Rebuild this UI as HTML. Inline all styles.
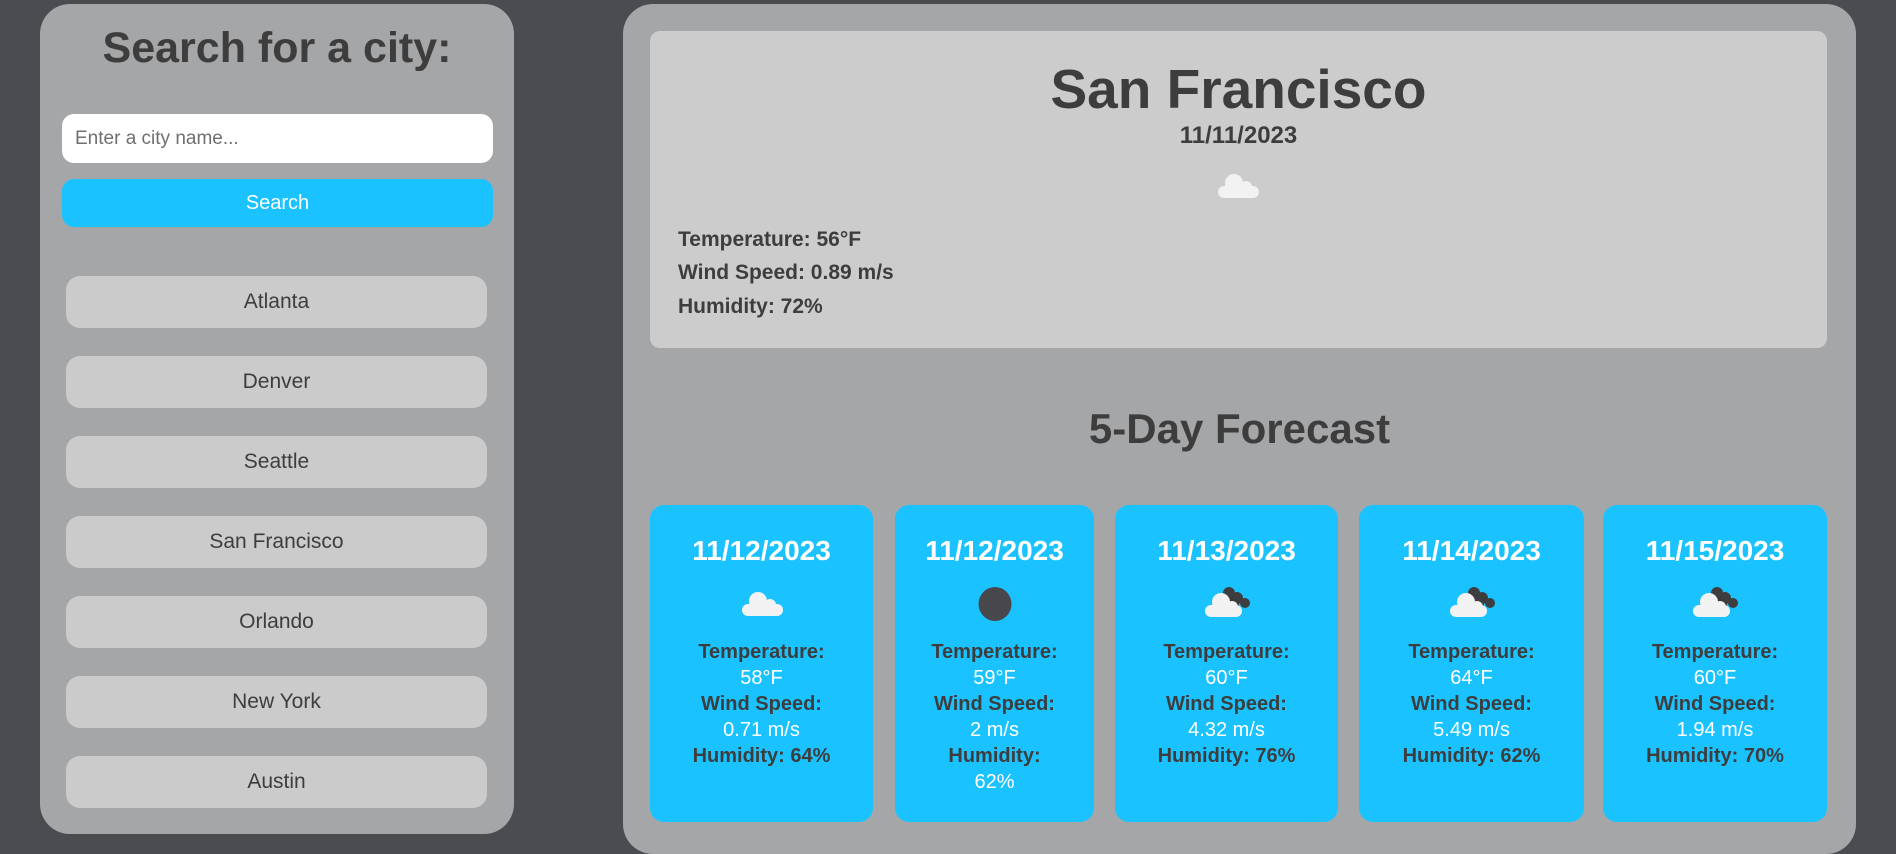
<!DOCTYPE html>
<html><head><meta charset="utf-8"><style>
*{box-sizing:border-box;margin:0;padding:0}
body{width:1896px;height:844px;background:#4b4c50;font-family:"Liberation Sans",Arial,sans-serif;position:relative;overflow:hidden;color:#3d3d3d}
.a{position:absolute}
.left{left:40px;top:4px;width:474px;height:830px;background:#a5a6a8;border-radius:30px}
.h1{left:40px;width:474px;top:24px;text-align:center;font-weight:bold;font-size:43px}
.inp{left:62px;top:114px;width:431px;height:49px;background:#fff;border-radius:12px;font-size:19px;color:#6f6f6f;padding:14px 13px}
.btn{left:62px;top:179px;width:431px;height:48px;background:#1ac3ff;border-radius:12px;color:#fff;font-size:20px;text-align:center;line-height:48px}
.city{left:66px;width:421px;height:52px;background:#cbcbcb;border-radius:14px;font-size:21px;text-align:center;line-height:52px}
.right{left:623px;top:4px;width:1233px;height:850px;background:#a5a6a8;border-radius:30px}
.cur{left:650px;top:31px;width:1177px;height:317px;background:#cccccc;border-radius:10px}
.c{text-align:center}
.info{left:678px;font-weight:bold;font-size:21px}
.card{top:505px;height:317px;background:#1ac3ff;border-radius:14px;text-align:center;font-size:20px;line-height:26px;color:#fff}
.card .d{font-weight:bold;font-size:28px;margin-top:29px;height:34px;line-height:34px}
.card .ic{height:52px;position:relative;margin-top:14px}
.card b{color:#3d3d3d}
.card .t{margin-top:5px}
</style></head><body>
<div class="a left"></div>
<div class="a h1">Search for a city:</div>
<div class="a inp">Enter a city name...</div>
<div class="a btn">Search</div>
<div class="a city" style="top:276px">Atlanta</div>
<div class="a city" style="top:356px">Denver</div>
<div class="a city" style="top:436px">Seattle</div>
<div class="a city" style="top:516px">San Francisco</div>
<div class="a city" style="top:596px">Orlando</div>
<div class="a city" style="top:676px">New York</div>
<div class="a city" style="top:756px">Austin</div>

<div class="a right"></div>
<div class="a cur"></div>
<div class="a c" style="left:650px;width:1177px;top:58px;font-size:55px;font-weight:bold;line-height:62px">San Francisco</div>
<div class="a c" style="left:650px;width:1177px;top:122px;font-size:24px;font-weight:bold">11/11/2023</div>
<svg class="a" style="left:1216px;top:170px" width="44" height="30" viewBox="0 0 44 30"><g fill="#f2f2f2"><circle cx="18" cy="13" r="9"/><circle cx="30" cy="17" r="6"/><rect x="2" y="16" width="41" height="12" rx="6"/></g></svg>
<div class="a info" style="top:228px">Temperature: 56°F</div>
<div class="a info" style="top:261px">Wind Speed: 0.89 m/s</div>
<div class="a info" style="top:295px">Humidity: 72%</div>

<div class="a c" style="left:623px;width:1233px;top:405px;font-size:42px;font-weight:bold">5-Day Forecast</div>

<div class="a card" style="left:650px;width:223px"><div class="d">11/12/2023</div><div class="ic"><svg width="44" height="30" viewBox="0 0 44 30" style="margin-top:6px"><g fill="#f2f2f2"><circle cx="18" cy="13" r="9"/><circle cx="30" cy="17" r="6"/><rect x="2" y="16" width="41" height="12" rx="6"/></g></svg></div><div class="t"><b>Temperature:</b><br>58°F<br><b>Wind Speed:</b><br>0.71 m/s<br><b>Humidity: 64%</b></div></div>

<div class="a card" style="left:895px;width:199px"><div class="d">11/12/2023</div><div class="ic"><svg width="40" height="40" viewBox="0 0 40 40" style="margin-top:2px"><ellipse cx="20" cy="20" rx="16.5" ry="17" fill="#48484c"/></svg></div><div class="t"><b>Temperature:</b><br>59°F<br><b>Wind Speed:</b><br>2 m/s<br><b>Humidity:</b><br>62%</div></div>

<div class="a card" style="left:1115px;width:223px"><div class="d">11/13/2023</div><div class="ic"><svg width="52" height="36" viewBox="0 0 52 36" style="margin-top:2px"><g fill="#3d3d40"><circle cx="28" cy="9" r="6"/><circle cx="36" cy="14" r="6"/><circle cx="44" cy="19" r="5"/><circle cx="32" cy="20" r="6"/></g><g fill="#f2f2f2"><circle cx="20" cy="18" r="9"/><circle cx="31" cy="23" r="6"/><rect x="4" y="21" width="37" height="12" rx="6"/></g></svg></div><div class="t"><b>Temperature:</b><br>60°F<br><b>Wind Speed:</b><br>4.32 m/s<br><b>Humidity: 76%</b></div></div>

<div class="a card" style="left:1359px;width:225px"><div class="d">11/14/2023</div><div class="ic"><svg width="52" height="36" viewBox="0 0 52 36" style="margin-top:2px"><g fill="#3d3d40"><circle cx="28" cy="9" r="6"/><circle cx="36" cy="14" r="6"/><circle cx="44" cy="19" r="5"/><circle cx="32" cy="20" r="6"/></g><g fill="#f2f2f2"><circle cx="20" cy="18" r="9"/><circle cx="31" cy="23" r="6"/><rect x="4" y="21" width="37" height="12" rx="6"/></g></svg></div><div class="t"><b>Temperature:</b><br>64°F<br><b>Wind Speed:</b><br>5.49 m/s<br><b>Humidity: 62%</b></div></div>

<div class="a card" style="left:1603px;width:224px"><div class="d">11/15/2023</div><div class="ic"><svg width="52" height="36" viewBox="0 0 52 36" style="margin-top:2px"><g fill="#3d3d40"><circle cx="28" cy="9" r="6"/><circle cx="36" cy="14" r="6"/><circle cx="44" cy="19" r="5"/><circle cx="32" cy="20" r="6"/></g><g fill="#f2f2f2"><circle cx="20" cy="18" r="9"/><circle cx="31" cy="23" r="6"/><rect x="4" y="21" width="37" height="12" rx="6"/></g></svg></div><div class="t"><b>Temperature:</b><br>60°F<br><b>Wind Speed:</b><br>1.94 m/s<br><b>Humidity: 70%</b></div></div>
</body></html>
